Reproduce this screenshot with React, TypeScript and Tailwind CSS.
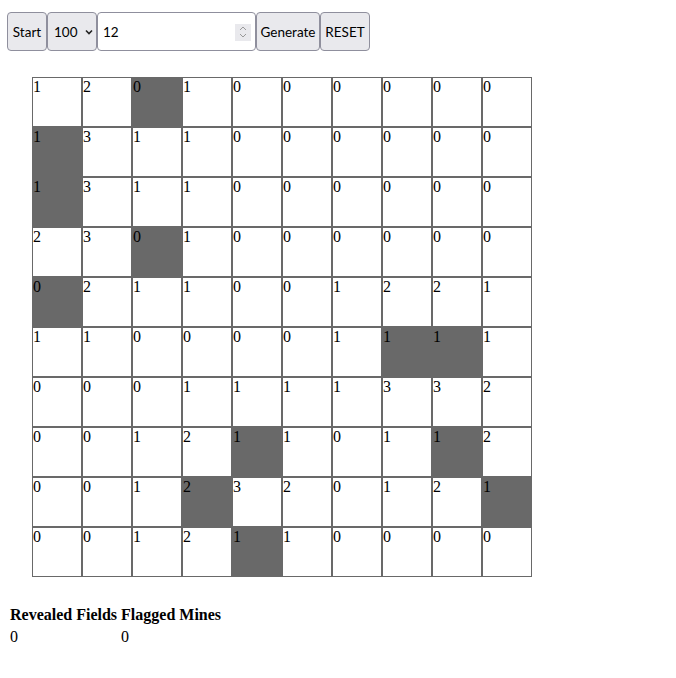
import React from "react";

const GRID: string[] = [
  "1 2 0* 1 0 0 0 0 0 0",
  "1* 3 1 1 0 0 0 0 0 0",
  "1* 3 1 1 0 0 0 0 0 0",
  "2 3 0* 1 0 0 0 0 0 0",
  "0* 2 1 1 0 0 1 2 2 1",
  "1 1 0 0 0 0 1 1* 1* 1",
  "0 0 0 1 1 1 1 3 3 2",
  "0 0 1 2 1* 1 0 1 1* 2",
  "0 0 1 2* 3 2 0 1 2 1*",
  "0 0 1 2 1* 1 0 0 0 0",
];

const cells = GRID.flatMap((row) =>
  row.split(" ").map((c) => ({ v: c.replace("*", ""), dark: c.endsWith("*") }))
);

const btn =
  "h-[39px] flex items-center justify-center border border-[#8f8f9d] rounded-[4px] bg-[#e9e9ed] text-[13.5px] text-black pt-px";

export default function App() {
  return (
    <div className="bg-white min-h-[678px] w-[676px]" style={{ fontFamily: "'Liberation Serif', serif" }}>
      <div
        className="flex pl-[7px] pt-[12px]"
        style={{ fontFamily: "Lato, 'Noto Sans', sans-serif" }}
      >
        <div className={`${btn} w-[40px]`}>Start</div>
        <div className={`${btn} w-[50px] justify-start pl-[6px] gap-[6px]`}>
          <span>100</span>
          <svg width="10" height="10" viewBox="0 0 10 10">
            <path d="M2 3.5 L5 6.5 L8 3.5" fill="none" stroke="#222" strokeWidth="1.6" />
          </svg>
        </div>
        <div className="h-[39px] w-[159px] flex items-center border border-[#8f8f9d] rounded-[4px] bg-white pl-[5px] pr-[4px] pt-px">
          <span className="flex-1 text-[13.5px] text-black">12</span>
          <div className="w-[16px] h-[17px] bg-[#e9e9ed] flex items-center justify-center">
            <svg width="10" height="14" viewBox="0 0 10 14">
              <path d="M2 5 L5 2 L8 5" fill="none" stroke="#999" strokeWidth="1" />
              <path d="M2 9 L5 12 L8 9" fill="none" stroke="#999" strokeWidth="1" />
            </svg>
          </div>
        </div>
        <div className={`${btn} w-[64px]`}>Generate</div>
        <div className={`${btn} w-[50px]`}>RESET</div>
      </div>

      <div
        className="ml-[32px] mt-[26px] grid grid-cols-[repeat(10,50px)] w-[500px]"
        style={{ fontFamily: "'Liberation Serif', serif" }}
      >
        {cells.map((c, i) => (
          <div
            key={i}
            className={`h-[50px] w-[50px] border border-[#696969] text-[16px] leading-[18px] text-black ${
              c.dark ? "bg-[#696969]" : "bg-white"
            }`}
          >
            {c.v}
          </div>
        ))}
      </div>

      <table className="ml-[8px] mt-[27px] border-separate border-spacing-[2px] text-[16px] leading-[18px] text-black">
        <thead>
          <tr>
            <th className="p-0 pr-[2px] text-left font-bold">Revealed Fields</th>
            <th className="p-0 text-left font-bold">Flagged Mines</th>
          </tr>
        </thead>
        <tbody>
          <tr>
            <td className="p-0 pt-[2px]">0</td>
            <td className="p-0 pt-[2px]">0</td>
          </tr>
        </tbody>
      </table>
    </div>
  );
}
